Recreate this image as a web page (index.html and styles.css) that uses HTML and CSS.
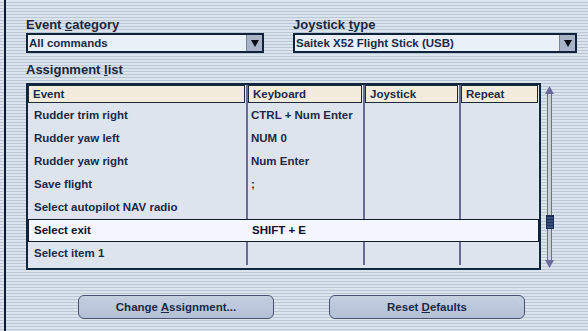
FILE: index.html
```html
<!DOCTYPE html>
<html lang="en">
<head>
    <meta charset="UTF-8">
    <title>Assignments</title>
    <link rel="stylesheet" href="styles.css">
</head>
<body>
    <div class="page">

        <div class="pickers">
            <div class="field field-event">
                <div class="label">Event <u>c</u>ategory</div>
                <div class="combo">
                    <span class="combo-text">All commands</span>
                    <span class="combo-btn"><span class="tri"></span></span>
                </div>
            </div>
            <div class="field field-joy">
                <div class="label">Joystick <u>t</u>ype</div>
                <div class="combo">
                    <span class="combo-text">Saitek X52 Flight Stick (USB)</span>
                    <span class="combo-btn"><span class="tri"></span></span>
                </div>
            </div>
        </div>

        <div class="label list-label">Assignment <u>l</u>ist</div>

        <div class="list-wrap">
            <div class="list">
                <div class="row head">
                    <div class="cell"><span>Event</span></div>
                    <div class="cell"><span>Keyboard</span></div>
                    <div class="cell"><span>Joystick</span></div>
                    <div class="cell"><span>Repeat</span></div>
                </div>
                <div class="row">
                    <div class="cell">Rudder trim right</div>
                    <div class="cell">CTRL + Num Enter</div>
                    <div class="cell"></div>
                    <div class="cell"></div>
                </div>
                <div class="row">
                    <div class="cell">Rudder yaw left</div>
                    <div class="cell">NUM 0</div>
                    <div class="cell"></div>
                    <div class="cell"></div>
                </div>
                <div class="row">
                    <div class="cell">Rudder yaw right</div>
                    <div class="cell">Num Enter</div>
                    <div class="cell"></div>
                    <div class="cell"></div>
                </div>
                <div class="row">
                    <div class="cell">Save flight</div>
                    <div class="cell">;</div>
                    <div class="cell"></div>
                    <div class="cell"></div>
                </div>
                <div class="row">
                    <div class="cell">Select autopilot NAV radio</div>
                    <div class="cell"></div>
                    <div class="cell"></div>
                    <div class="cell"></div>
                </div>
                <div class="row selected">
                    <div class="cell">Select exit</div>
                    <div class="cell">SHIFT + E</div>
                    <div class="cell"></div>
                    <div class="cell"></div>
                </div>
                <div class="row">
                    <div class="cell">Select item 1</div>
                    <div class="cell"></div>
                    <div class="cell"></div>
                    <div class="cell"></div>
                </div>
            </div>

            <!-- scroll bar -->
            <svg class="scroll" width="14" height="187" viewBox="0 0 14 187">
                <rect x="4.5" y="8" width="4" height="170" fill="#c9cfe2" stroke="#6a6a9c" stroke-width="1"/>
                <polygon points="6.5,3 2,11 11,11" fill="#6a6a9c"/>
                <polygon points="6.5,185 2,177 11,177" fill="#6a6a9c"/>
                <rect x="3" y="132" width="8" height="14" fill="#1c2f5a"/>
                <line x1="4" y1="135" x2="10" y2="135" stroke="#5a6f9a"/>
                <line x1="4" y1="138" x2="10" y2="138" stroke="#5a6f9a"/>
                <line x1="4" y1="141" x2="10" y2="141" stroke="#5a6f9a"/>
                <line x1="4" y1="144" x2="10" y2="144" stroke="#5a6f9a"/>
            </svg>
        </div>

        <div class="buttons">
            <button class="btn">Change <u>A</u>ssignment...</button>
            <button class="btn">Reset <u>D</u>efaults</button>
        </div>

    </div>
</body>
</html>
```

FILE: styles.css
```css
body {
    margin: 0;
    font-family: "Liberation Sans", Arial, sans-serif;
    font-weight: bold;
    color: #1b2a48;
    background: repeating-linear-gradient(to bottom, #dbe3ec 0, #dbe3ec 2px, #b9c6d6 2px, #b9c6d6 3px);
    height: 331px;
    overflow: hidden;
}

.page {
    margin-left: 4px;
    border-left: 2px solid #0d1b2e;
    height: 331px;
    padding: 17px 0 0 20px;
    box-sizing: border-box;
}

.label {
    font-size: 13px;
    line-height: 15px;
    color: #1a2840;
}

.pickers {
    display: flex;
    gap: 29px;
}

.field-event {
    width: 238px;
}

.field-joy {
    width: 284px;
}

.combo {
    margin-top: 1px;
    height: 20px;
    box-sizing: border-box;
    border: 2px solid #0e223c;
    background: #e9f0f8;
    display: flex;
    align-items: center;
}

.combo-text {
    flex: 1;
    font-size: 11.5px;
    padding-left: 1px;
}

.combo-btn {
    width: 15px;
    height: 100%;
    background: #a8b3c8;
    display: flex;
    align-items: center;
    justify-content: center;
    border-left: 1px solid #7a86a0;
}

.tri {
    width: 0;
    height: 0;
    border-left: 4.5px solid transparent;
    border-right: 4.5px solid transparent;
    border-top: 7px solid #050a14;
}

.list-label {
    margin-top: 9px;
}

.list-wrap {
    display: flex;
    gap: 2px;
    margin-top: 6px;
}

.list {
    width: 515px;
    height: 187px;
    box-sizing: border-box;
    border: 2px solid #10263e;
    background: #dde4ee;
    overflow: hidden;
}

.row {
    display: grid;
    grid-template-columns: 218px 117px 96px 80px;
    height: 23px;
    font-size: 11.5px;
    line-height: 23px;
    box-sizing: border-box;
}

.row .cell {
    padding-left: 6px;
    white-space: nowrap;
    overflow: hidden;
}

.row .cell + .cell {
    border-left: 2px solid #6b6b98;
    padding-left: 3px;
}

.row.head {
    height: 19px;
}

.row.head .cell {
    padding: 0 1px 1px 0;
}

.row.head .cell + .cell {
    padding-left: 0;
}

.row.head .cell span {
    display: block;
    height: 18px;
    line-height: 16px;
    box-sizing: border-box;
    border: 1px solid #1a2a3a;
    background: #f3ecdc;
    padding-left: 4px;
}

.row.selected {
    background: #f5f7fe;
    border: 1px solid #0f1d33;
    line-height: 21px;
    color: #0b1424;
}

.row.selected .cell + .cell {
    border-left: 2px solid transparent;
}

.row.selected .cell {
    padding-left: 5px;
}

.row.selected .cell + .cell {
    padding-left: 3px;
}

.scroll {
    display: block;
}

.buttons {
    display: flex;
    gap: 55px;
    margin: 25px 0 0 52px;
}

.btn {
    width: 196px;
    height: 24px;
    border: 1.5px solid #4a5070;
    border-radius: 6px;
    background: linear-gradient(#c4cfe0, #b3c0d5);
    font-family: "Liberation Sans", Arial, sans-serif;
    font-weight: bold;
    font-size: 11.5px;
    color: #1b2a48;
    padding: 0;
}
```
